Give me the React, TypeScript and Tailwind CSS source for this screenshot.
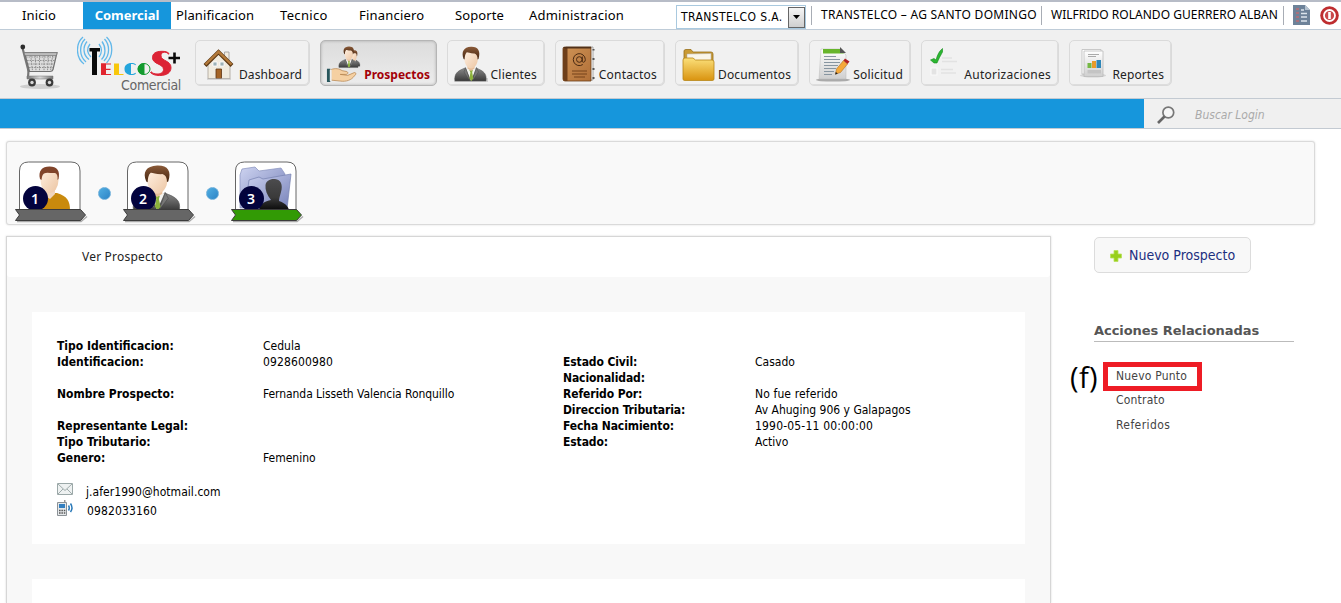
import React from "react";

const CONDENSED = "font-['DejaVu_Sans_Condensed','DejaVu_Sans',sans-serif]";

function Gradients() {
  return (
    <svg className="absolute size-0" aria-hidden="true">
      <defs>
        <linearGradient id="skin" x1="0" y1="0" x2="1" y2="1">
          <stop offset="0" stopColor="#fff0e2" />
          <stop offset="1" stopColor="#ecc5a2" />
        </linearGradient>
        <linearGradient id="suit" x1="0" y1="0" x2="0" y2="1">
          <stop offset="0" stopColor="#8a8a8a" />
          <stop offset="1" stopColor="#3a3a3a" />
        </linearGradient>
        <linearGradient id="hair" x1="0" y1="0" x2="0" y2="1">
          <stop offset="0" stopColor="#8a5a38" />
          <stop offset="1" stopColor="#452510" />
        </linearGradient>
        <linearGradient id="gold" x1="0" y1="0" x2="0" y2="1">
          <stop offset="0" stopColor="#fbe07a" />
          <stop offset="1" stopColor="#d9930f" />
        </linearGradient>
        <linearGradient id="leather" x1="0" y1="0" x2="1" y2="1">
          <stop offset="0" stopColor="#cf9355" />
          <stop offset="1" stopColor="#b06f38" />
        </linearGradient>
        <linearGradient id="paper" x1="0" y1="0" x2="0" y2="1">
          <stop offset="0" stopColor="#ffffff" />
          <stop offset="1" stopColor="#cfcfcf" />
        </linearGradient>
        <linearGradient id="violet" x1="0" y1="0" x2="1" y2="1">
          <stop offset="0" stopColor="#cdd3f0" />
          <stop offset="1" stopColor="#7580b8" />
        </linearGradient>
        <linearGradient id="metal" x1="0" y1="0" x2="1" y2="0">
          <stop offset="0" stopColor="#777" />
          <stop offset=".5" stopColor="#d8d8d8" />
          <stop offset="1" stopColor="#777" />
        </linearGradient>
        <linearGradient id="shadowman" x1="0" y1="0" x2="0" y2="1">
          <stop offset="0" stopColor="#4c4c4e" />
          <stop offset=".6" stopColor="#3a3a3a" />
          <stop offset="1" stopColor="#0a0a0a" />
        </linearGradient>
      </defs>
    </svg>
  );
}

/* Suited man, drawn on a 34x36 grid */
function ManShape() {
  return (
    <g>
      <path d="M1 35 C0 28 3 25 11 22 L17 27 L22 22 C30 25 33 28 32 35 Z" fill="url(#suit)" stroke="#555" strokeWidth=".5" />
      <path d="M12 22 L17 35 L22 22 L17 24 Z" fill="#f4f4f0" />
      <path d="M11.5 21.5 L10 26 L16 35 Z M22.5 21.5 L24.5 26 L18.3 35 Z" fill="#777" stroke="#444" strokeWidth=".4" />
      <path d="M15.4 24 h3.400 l-.6 2.500 1.100 6 -1.900 2.500 -2 -2.500 1 -6 Z" fill="#8cb23c" />
      <path d="M13.500 18 h7 v4.500 l-3.500 2.500 -3.500 -2.500 Z" fill="#e6bd98" />
      <path d="M10.300 12 C10.300 6 13 5 17 5 C21 5 23.900 6 23.900 12 C23.900 18 20.500 22.500 17 22.500 C13.500 22.500 10.300 18 10.300 12 Z" fill="url(#skin)" />
      <path d="M9.6 13 C7 6 9.500 1.200 17 .8 C24 .5 27 5 24.500 13 L23.600 13.500 C23.700 10 22.500 8 20.500 7.400 C16 7.600 13.500 6 12.600 6.400 C11 8 10.700 11 10.600 13.600 Z" fill="url(#hair)" />
    </g>
  );
}

function CartIcon() {
  return (
    <svg className="size-full" viewBox="0 0 42 46">
      <ellipse cx="21" cy="42.5" rx="20" ry="2.5" fill="#cfcfcf" />
      <path d="M3.5 4 L9 25 C10 29 9 31 9 33 H33" fill="none" stroke="#777" strokeWidth="2.2" />
      <circle cx="3.8" cy="3" r="2.4" fill="#2d2d2d" />
      <path d="M5.500 8.500 H38 L34 25.500 Q33.500 27.500 31 27.500 H10.500 Z" fill="#dcdcdc" stroke="#707070" strokeWidth="1.2" />
      <path d="M7 13 H37 M8 16.500 H36 M9 20 H35 M10 23.500 H34 M11.500 9 L13.500 27 M16 9 L17 27 M20.500 9 V27 M25 9 V27 M29.500 9 L28.500 27 M34 9 L31.500 27" stroke="#888" strokeWidth=".9" strokeDasharray="1.6 1" />
      <path d="M5 8.600 H38 L37.500 11.500 H6 Z" fill="#bdbdbd" stroke="#777" strokeWidth=".7" />
      <path d="M8 32 H34 V35 H8 Z" fill="url(#metal)" stroke="#777" strokeWidth=".5" />
      <g fill="#3a3a3a"><circle cx="13" cy="38.500" r="3.900" /><circle cx="30.500" cy="38.500" r="3.900" /></g>
      <g fill="#d8d8d8"><circle cx="13" cy="38.500" r="1.700" /><circle cx="30.500" cy="38.500" r="1.700" /></g>
    </svg>
  );
}

function TelcosLogo() {
  return (
    <svg className="size-full" viewBox="0 0 106 42">
      <g fill="none" stroke="#62b8ea" strokeWidth="1.3">
        <path d="M13 8 C10 12 10 17 14 21" />
        <path d="M10 5.500 C5.500 11 6 19 12 23.500" />
        <path d="M8 3 C2 9 2 20 9 26" />
        <path d="M6 1 C-2 8 -1 22 7 28" />
        <path d="M22 8 C25 12 25 17 22 21" />
        <path d="M25 5.500 C29 11 29 19 24.500 23.500" />
        <path d="M27.500 3 C33 9 33 19 27 25" />
        <path d="M29.500 1 C37 8 36 20 29.500 27" />
      </g>
      <path d="M12.500 12 H23 V15.500 H20 V39 H15 V15.500 H12.500 Z" fill="#0a0a0a" />
      <path d="M24 28 H34 M29 33.300 H33.500 M24 38.500 H34" stroke="#e1252f" strokeWidth="1.200" />
      <path d="M24 27.500 H29 V39 H24 Z" fill="#e1252f" />
      <path d="M37 27.500 H42 V38 H46.500 V39 H37 Z" fill="#f8c70c" />
      <path d="M59 28.600 C57.600 27.400 56.500 27 54.500 27 C50 27 47.500 29.500 47.500 33 C47.500 36.500 50 39 54.500 39 C56.500 39 58 38.500 59 37.500 L58.400 36.800 C57.300 37.700 56.400 38 54 38 V28 C56.400 28 57.500 28.500 58.400 29.300 Z" fill="#24a5dc" />
      <ellipse cx="67" cy="33" rx="6" ry="5.500" fill="#f0f0f0" stroke="#129b2e" strokeWidth="1" />
      <path d="M67.500 27 C58.500 27 58.500 39 67.500 39 Z" fill="#129b2e" />
      <path d="M92 17.500 C90.500 15.800 88 15.300 85 15.300 C78 15.300 75.500 18 75.500 21.700 C75.500 28.500 86.500 27.500 86.500 33.500 C86.500 36.500 83.500 38 80 38 C77.500 38 75.500 37.200 74.200 35.800 L73.500 36.500 C75.500 38.500 78.500 39.500 82.500 39.500 C90 39.500 94 36.500 94 31.500 C94 24.500 84 25 84 19.800 C84 17.500 85 16.200 87.500 16.200 C89.500 16.200 91 17 91.500 18.300 Z" fill="#dc2335" stroke="#dc2335" />
      <path d="M97.500 16.500 v11 M91.500 22 h11.500" stroke="#0a0a0a" strokeWidth="2.600" />
    </svg>
  );
}

function HouseIcon() {
  return (
    <svg className="size-full" viewBox="0 0 36 36">
      <path d="M23.500 6 h4.500 v10 h-4.500 Z" fill="#f2ece0" stroke="#999" strokeWidth=".8" />
      <path d="M7 18 L17 7 L29 18 V32.500 H7 Z" fill="#f1ecdf" stroke="#9e978a" strokeWidth=".7" />
      <path d="M4 19.500 L17.500 6 L31 19.500" fill="none" stroke="#5d3813" strokeWidth="4" />
      <path d="M4.500 18.500 L17.500 5.800 L30.500 18.500" fill="none" stroke="#b2793a" strokeWidth="2.400" />
      <path d="M12 16 h4 v4 h-4 Z M19 16 h4 v4 h-4 Z" fill="#9db2b6" stroke="#fff" strokeWidth=".8" />
      <path d="M15 23 h5.500 v9.500 h-5.500 Z" fill="#a56526" stroke="#5e3511" strokeWidth=".8" />
      <path d="M6 33 h24" stroke="#bbb" />
    </svg>
  );
}

function HandIcon() {
  return (
    <svg className="size-full" viewBox="0 0 36 38">
      <g transform="translate(22 4) scale(.4 .5)"><ManShape /></g>
      <g transform="translate(12 0) scale(.65)"><ManShape /></g>
      <path d="M4 25 C9 23 13 24 16 26 L21 27 C23 28 22 30 20 30 L14 30 L22 31 L29 28 C31 28 31 30 29 31.500 C26 36 20 38 14 37 L4 36 Z" fill="#f5d0a2" stroke="#b8864e" strokeWidth=".8" />
      <path d="M0 24 h3.500 v14 h-3.500 Z" fill="#28565c" />
      <path d="M3 25 h2 v12 h-2 Z" fill="#eee" />
    </svg>
  );
}

function BookIcon() {
  return (
    <svg className="size-full" viewBox="0 0 36 36">
      <path d="M5 1 H32 V34 H5 Z" fill="#fafafa" stroke="#888" strokeWidth=".7" />
      <path d="M32.500 3 v1.500 M32.500 12 v2 M32.500 22 v2 M32.500 31 v2" stroke="#555" strokeWidth="2" />
      <path d="M2 2.500 Q2 1 4 1 H30 V35 H4 Q2 35 2 33 Z" fill="url(#leather)" stroke="#6a3c16" strokeWidth=".8" />
      <path d="M2 3 Q2 1 4 1 H6.500 V35 H4 Q2 35 2 33 Z" fill="#6e3f1a" />
      <path d="M2 1 H30 V2.500 H4 Z" fill="#503019" />
      <path d="M11 25 h15 M11 28 h15 M13 31 h11" stroke="#75421a" />
      <circle cx="18.300" cy="13.500" r="2.800" fill="none" stroke="#4a2a12" strokeWidth="1" />
      <path d="M21.300 10.500 v4.500 c0 2 3 1.800 3-1.500 a6 6 0 1 0-2.500 5" fill="none" stroke="#4a2a12" strokeWidth="1" />
    </svg>
  );
}

function FolderIcon() {
  return (
    <svg className="size-full" viewBox="0 0 36 36">
      <path d="M3 31 V5 Q3 3.500 5 3.500 H10 L12 6 H30 Q32 6 32 8 V31 Z" fill="#c99a35" stroke="#98701a" strokeWidth=".8" />
      <path d="M6 8 L30 7.500 V17 H6 Z" fill="#faf6ea" stroke="#aaa" strokeWidth=".5" />
      <path d="M2 14 Q2 12 4 12 H12 L14.500 14 H31 Q33 14 33 16 V33 Q33 34.500 31 34.500 H4 Q2 34.500 2 33 Z" fill="url(#gold)" stroke="#b88618" strokeWidth=".8" />
    </svg>
  );
}

function RequestIcon() {
  return (
    <svg className="size-full" viewBox="0 0 36 36">
      <ellipse cx="17" cy="34" rx="17" ry="1.600" fill="#aaa" />
      <path d="M5 3 H24 L30 9 V33 H3 Z" fill="url(#paper)" stroke="#bbb" strokeWidth=".5" />
      <path d="M7 3 H25 L28 7.500 H7 Z" fill="#67b52c" />
      <path d="M24 1 L30 7 H24 Z" fill="#555" />
      <path d="M8 10.500 h12 M8 13.500 h16 M8 16.500 h16 M8 19.500 h14 M8 22.500 h12 M8 25.500 h10 M8 28.500 h8" stroke="#8795a0" strokeWidth="1.100" />
      <path d="M19.500 28 L20.500 23 L27.500 14.500 L31.500 18 L24.500 26.500 Z" fill="#f5a93a" stroke="#b26e20" strokeWidth=".6" />
      <path d="M27.500 14.500 L29 12.500 L33.500 15.500 L31.500 18 Z" fill="#b22224" />
      <path d="M19.200 28.800 L19.800 26 L21.800 27.500 Z" fill="#222" />
    </svg>
  );
}

function CheckIcon() {
  return (
    <svg className="size-full" viewBox="0 0 36 36">
      <path d="M3.500 14 L7 12.500 L9 14 Q11 6 15.500 2.500 L15.500 6 Q12 12 10 17 L7 17 Z" fill="#2cb631" stroke="#138a1a" strokeWidth=".6" />
      <path d="M15 12 h10 M15 15.500 h15 M14 23.500 h12 M14 27 h15" stroke="#e2e2e2" strokeWidth="1.300" />
      <path d="M4 22 h6 v7 h-6 Z" fill="#e3e3e3" stroke="#f9f9f9" strokeWidth="1.200" />
    </svg>
  );
}

function ReportIcon() {
  return (
    <svg className="size-full" viewBox="0 0 36 36">
      <ellipse cx="18" cy="29.500" rx="13" ry="2" fill="#d4d4d4" />
      <path d="M7 3.500 H26 V28 H7 Z" fill="#fff" stroke="#bbb" strokeWidth=".8" />
      <path d="M9 5 H28 V30.500 H9 Z" fill="url(#paper)" stroke="#bbb" strokeWidth=".8" />
      <path d="M13 8.500 h11 M13 10.500 h8" stroke="#aaa" />
      <path d="M12.500 17 h4 v5 h-4 Z" fill="#75b844" />
      <path d="M17 15 h4 v7 h-4 Z" fill="#e89a2a" />
      <path d="M21.500 14 h4.500 v8 h-4.500 Z" fill="#2e86b8" />
      <path d="M12.500 24 h13.500 v3.500 h-13.500 Z" fill="#c4c4c4" />
    </svg>
  );
}

function ManIcon() {
  return (
    <svg className="size-full" viewBox="0 0 34 36">
      <path d="M0 32 h34 v4 h-34 Z" fill="#cfcfcf" />
      <ManShape />
    </svg>
  );
}

type MenuItem = { label: string; cell: string };

const menu: MenuItem[] = [
  { label: "Inicio", cell: "w-[83px] justify-center pr-[5px] tracking-[0.15px]" },
  { label: "Comercial", cell: "w-[88px] justify-center bg-[#1696dc] font-bold text-white" },
  { label: "Planificacion", cell: "w-[109px] pl-[5px] tracking-[0.1px]" },
  { label: "Tecnico", cell: "w-[79px] tracking-[0.35px]" },
  { label: "Financiero", cell: "w-[96px] tracking-[0.2px]" },
  { label: "Soporte", cell: "w-[74px] tracking-[0.1px]" },
  { label: "Administracion", cell: "w-[147px] tracking-[0.22px]" },
];

function TopMenu() {
  return (
    <nav className="flex h-[30px] items-stretch border-t-2 border-b border-t-[#b7bcc7] border-b-[#bfccd8] bg-white text-[13px]">
      {menu.map((m) => (
        <a key={m.label} className={`flex shrink-0 items-center pt-px ${m.cell}`}>
          {m.label}
        </a>
      ))}
      <div className="mt-[3px] flex h-6 w-[130px] shrink-0 items-center border border-[#a9c9df] bg-white pl-1">
        <span className={`w-[107px] shrink-0 text-[12px] tracking-[0.4px] whitespace-nowrap ${CONDENSED}`}>TRANSTELCO S.A.</span>
        <span className="flex h-[21px] w-[17px] shrink-0 items-center justify-center border border-[#666] bg-linear-to-b from-[#f5f5f5] to-[#cfcfcf]">
          <svg className="h-1 w-[7px]" viewBox="0 0 7 4"><path d="M0 0 H7 L3.500 4 Z" fill="#000" /></svg>
        </span>
      </div>
      <div className="mt-[3px] ml-[5px] flex h-5 shrink-0 items-center text-[12px] whitespace-nowrap">
        <span className="w-[230px] border-l border-[#a8adb5] pb-px pl-[9px] tracking-[0.28px]">TRANSTELCO – AG SANTO DOMINGO</span>
        <span className="w-[243px] border-x border-[#a8adb5] pb-px pl-[9px] tracking-[0.03px]">WILFRIDO ROLANDO GUERRERO ALBAN</span>
      </div>
      <svg className="mt-[3px] ml-[9px] h-[20px] w-[17px] shrink-0" viewBox="0 0 17 20">
        <path d="M0 0 H12 L17 5 V20 H0 Z" fill="#6d8299" />
        <path d="M12 0 V5 H17 Z" fill="#b5c2d0" />
        <path d="M3 4 h3 M3 8 h3 M3 12 h3 M3 16 h3" stroke="#a8707c" strokeWidth="2" />
        <path d="M8 5 h3 M8 8.500 h6 M8 12 h6 M8 16 h6" stroke="#dbe4ec" strokeWidth="1.500" />
      </svg>
      <svg className="mt-1 ml-[10px] size-[19px] shrink-0" viewBox="0 0 19 19">
        <circle cx="9.500" cy="9.500" r="9.300" fill="#be2d2f" />
        <circle cx="9.500" cy="9.500" r="5.500" fill="#c9484a" stroke="#fff" strokeWidth="1.800" />
        <path d="M9.500 6 v7" stroke="#fff" strokeWidth="2.600" />
      </svg>
    </nav>
  );
}

type Tool = { label: string; box: string; icon: React.ReactNode; iconBox: string; active?: boolean };

const tools: Tool[] = [
  { label: "Dashboard", box: "w-[115px] mr-[10px] pr-[7px] tracking-[0.1px]", iconBox: "left-[5px]", icon: <HouseIcon /> },
  { label: "Prospectos", box: "w-[117px] mr-[10px] pr-[6px]", iconBox: "left-[5px]", icon: <HandIcon />, active: true },
  { label: "Clientes", box: "w-[98px] mr-[10px] pr-[7px] tracking-[0.2px]", iconBox: "left-[5px]", icon: <ManIcon /> },
  { label: "Contactos", box: "w-[110px] mr-[10px] pr-[7px] tracking-[0.2px]", iconBox: "left-[5px]", icon: <BookIcon /> },
  { label: "Documentos", box: "w-[124px] mr-[10px] pr-[7px] tracking-[0.1px]", iconBox: "left-[5px]", icon: <FolderIcon /> },
  { label: "Solicitud", box: "w-[102px] mr-[10px] pr-[7px] tracking-[0.2px]", iconBox: "left-[6px]", icon: <RequestIcon /> },
  { label: "Autorizaciones", box: "w-[138px] mr-[10px] pr-[7px] tracking-[0.25px]", iconBox: "left-[5px]", icon: <CheckIcon /> },
  { label: "Reportes", box: "w-[103px] pr-[7px] tracking-[0.1px]", iconBox: "left-[5px]", icon: <ReportIcon /> },
];

function Toolbar() {
  return (
    <div className="flex h-[68px] items-start bg-[#f0f0f0]">
      <div className="mt-[14px] ml-[19px] h-[46px] w-[42px] shrink-0"><CartIcon /></div>
      <div className="mt-[6px] ml-4 flex h-[60px] w-[106px] shrink-0 flex-col">
        <div className="h-[42px] shrink-0"><TelcosLogo /></div>
        <span className={`-mt-[2px] self-end pr-[2px] text-[14px] leading-[18px] tracking-[-0.35px] text-[#666] ${CONDENSED}`}>Comercial</span>
      </div>
      <div className="mt-[10px] ml-[12px] flex text-[12px] text-[#222]">
        {tools.map((t) => (
          <a
            key={t.label}
            className={`relative flex h-[46px] shrink-0 items-end justify-end rounded-[5px] border pb-px ${t.box} ${
              t.active
                ? "border-[#b5b5b5] bg-linear-to-b from-[#dcdcdc] to-[#ececec] font-bold text-[#a30008] shadow-[inset_0_0_3px_#aaa]"
                : "border-[#dadada] bg-[#f1f1f1] shadow-[inset_-1px_-1px_0_#dddddd]"
            }`}
          >
            <span className={`absolute top-[5px] size-9 ${t.iconBox}`}>{t.icon}</span>
            {t.label}
          </a>
        ))}
      </div>
    </div>
  );
}

function SearchBar() {
  return (
    <div className="flex h-[31px] border-y border-[#c3cad2] bg-[#f0f0f0]">
      <div className="w-[1144px] bg-[#1696dc]" />
      <div className="flex items-center pl-[13px]">
        <svg className="mt-[3px] size-[18px]" viewBox="0 0 18 18">
          <circle cx="11.300" cy="6.500" r="5.400" fill="#f6f6f6" stroke="#777" strokeWidth="1.700" />
          <path d="M7.500 10.500 L1 17" stroke="#666" strokeWidth="2.600" />
        </svg>
        <span className={`mt-[3px] ml-5 text-[12px] text-[#aaa] italic ${CONDENSED}`}>Buscar Login</span>
      </div>
    </div>
  );
}

function CasualMan() {
  return (
    <g>
      <path d="M10 49 C10 37 15 34 25 32 H38 C48 35 51 40 51 49 Z" fill="#c98a0d" />
      <path d="M25 24 h11 v9 l-5 5 -6 -4 Z" fill="#f0d5bd" />
      <ellipse cx="30.500" cy="19" rx="9" ry="13" fill="url(#skin)" />
      <path d="M21 18 C19 10 23 5.500 30.500 5.500 C38 5.500 41.500 10 39.500 18 L38.500 19 C39 15 38 12.500 36 12 C32 12.500 28 11 25 12.500 C23 14 23 16 22.500 19 Z" fill="#80442a" />
    </g>
  );
}

function FolderMan() {
  return (
    <g>
      <path d="M5 47 V14 L7 8 L20 6 L24 10 L46 7 L50 13 V47 Z" fill="url(#violet)" stroke="#8690bd" strokeWidth=".7" />
      <path d="M10 48 L14 19 L24 16 L28 18 L56 13 L52 48 Z" fill="url(#violet)" stroke="#7681b0" strokeWidth=".7" />
      <path d="M24 49 C25 43 30 40 36 39 C32 34 30 29 30.500 24 C31 20 35 17.500 40 18 C46 18.500 48 24 46 31 C45 35 44 37 44 40 C50 42 53 45 54 49 Z" fill="url(#shadowman)" />
    </g>
  );
}

const steps = [
  { n: 1, ribbon: "#666666", figure: <CasualMan /> },
  { n: 2, ribbon: "#666666", figure: <g transform="translate(5 3.500) scale(1.480 1.300)"><ManShape /></g> },
  { n: 3, ribbon: "#329a05", figure: <FolderMan /> },
];

function Steps() {
  return (
    <section className="mt-3 ml-[6px] flex h-[84px] w-[1309px] items-start rounded-[3px] border border-[#dadada] bg-[#f9f9f9] pl-2 shadow-[0_0_2px_#d8d8d8]">
      {steps.map((s) => (
        <React.Fragment key={s.n}>
          {s.n > 1 && (
            <span className="mt-[45px] mr-3 ml-[10px] size-[13px] shrink-0 rounded-full border border-[#70b0db] bg-linear-to-br from-[#50aee2] to-[#2d84c6]" />
          )}
          <div className="relative mt-[19px] h-[62px] w-[73px] shrink-0">
            <svg className="size-full" viewBox="0 0 73 62">
              <path d="M4.500 49 V10 Q4.500 1 13.500 1 H56 Q65 1 65 10 V49 Z" fill="#fff" stroke="#666" strokeWidth="1" />
              <g transform="translate(4 0)">{s.figure}</g>
              <circle cx="20.500" cy="37.500" r="12.500" fill="#03033d" />
              <path d="M2 60.500 H66 L72 55.500" fill="none" stroke="#aaa" strokeWidth="1.500" />
              <path d="M.5 48.500 H65.500 L70.500 54 L65.500 59.500 H.5 L4.500 54 Z" fill={s.ribbon} stroke="#3c3c3c" strokeWidth="1" />
            </svg>
            <span className="absolute top-[28px] left-[10px] w-5 text-center text-[14px] leading-5 font-semibold text-white">{s.n}</span>
          </div>
        </React.Fragment>
      ))}
    </section>
  );
}

const left: [string, string][] = [
  ["Tipo Identificacion:", "Cedula"],
  ["Identificacion:", "0928600980"],
  ["", ""],
  ["Nombre Prospecto:", "Fernanda Lisseth Valencia Ronquillo"],
  ["", ""],
  ["Representante Legal:", ""],
  ["Tipo Tributario:", ""],
  ["Genero:", "Femenino"],
];

const right: [string, string][] = [
  ["", ""],
  ["Estado Civil:", "Casado"],
  ["Nacionalidad:", ""],
  ["Referido Por:", "No fue referido"],
  ["Direccion Tributaria:", "Av Ahuging 906 y Galapagos"],
  ["Fecha Nacimiento:", "1990-05-11 00:00:00"],
  ["Estado:", "Activo"],
];

function valueTracking(v: string) {
  if (/^\d+$/.test(v)) return "tracking-[0.12px]";
  if (/^\d/.test(v)) return "tracking-[0.18px]";
  if (v.length > 30) return "tracking-[-0.06px]";
  return v.startsWith("No ") ? "tracking-[0.12px]" : "";
}

function Fields({ rows, label, className }: { rows: [string, string][]; label: string; className: string }) {
  return (
    <dl className={className}>
      {rows.map(([k, v], i) => (
        <div key={i} className="flex h-4">
          <dt className={`shrink-0 font-bold ${label}`}>{k}</dt>
          <dd className={valueTracking(v)}>{v}</dd>
        </div>
      ))}
    </dl>
  );
}

function Detail() {
  return (
    <main className="h-[367px] w-[1045px] shrink-0 border border-b-0 border-[#d6d6d6] bg-[#f8f8f8] shadow-[0_0_2px_#d8d8d8]">
      <h2 className="h-10 rounded-b-[3px] bg-white pt-[11px] pl-[75px] text-[12px] leading-[18px] tracking-[0.2px] text-[#222]">Ver Prospecto</h2>
      <div className={`mt-[35px] ml-[25px] h-[232px] w-[993px] bg-white pt-[26px] pl-[25px] text-[12px] leading-4 text-black ${CONDENSED}`}>
        <div className="flex">
          <Fields rows={left} label="w-[206px]" className="w-[506px]" />
          <Fields rows={right} label="w-[192px] tracking-[-0.1px]" className="" />
        </div>
        <div className="mt-[15px] flex h-[19px]">
          <svg className="mt-[2px] h-3 w-4" viewBox="0 0 16 12">
            <path d="M.5 .5 H15.500 V11.500 H.5 Z" fill="#eef1f1" stroke="#9ba8a8" />
            <path d="M1 1 L8 7.500 L15 1 M1 11 L6 6 M15 11 L10 6" fill="none" stroke="#9fabab" />
          </svg>
          <span className="mt-[3px] ml-[13px] tracking-[0.05px]">j.afer1990@hotmail.com</span>
        </div>
        <div className="flex h-[19px]">
          <svg className="h-[17px] w-4" viewBox="0 0 16 17">
            <path d="M7 0 h1.500 v4 h-1.500 Z" fill="#999" />
            <path d="M.5 2.500 H9.500 V15.500 H.5 Z" fill="#e5e8ea" stroke="#8b9196" />
            <path d="M2 4 H8 V8 H2 Z" fill="#337fc0" />
            <path d="M2 10.500 h1.600 M4.400 10.500 h1.500 M6.800 10.500 h1.500 M2 13 h1.600 M4.400 13 h1.500 M6.800 13 h1.500" stroke="#555" strokeWidth="1.300" />
            <path d="M11.500 5.500 Q13 8 11.500 10.500 M13.500 3.500 Q16.500 8 13.500 12" fill="none" stroke="#2878b8" strokeWidth="1.500" />
          </svg>
          <span className="mt-[3px] ml-[14px] tracking-[0.12px]">0982033160</span>
        </div>
      </div>
      <div className="mt-[35px] ml-[25px] h-6 w-[993px] bg-white" />
    </main>
  );
}

function Sidebar() {
  return (
    <aside className={`ml-[43px] w-[200px] text-[12px] text-[#444] ${CONDENSED}`}>
      <a className="mt-px flex h-9 w-[157px] items-center rounded-[5px] border border-[#dcdcdc] bg-[#f8f8f8] pt-px pl-[15px] text-[14px] whitespace-nowrap text-[#1c2f80]">
        <svg className="mr-[7px] size-3 shrink-0" viewBox="0 0 12 12">
          <path d="M4 .5 h4 v3.500 h3.500 v4 H8 v3.500 H4 V8 H.5 V4 H4 Z" fill="#98cf1c" stroke="#b9e05c" strokeWidth=".8" />
        </svg>
        Nuevo Prospecto
      </a>
      <h3 className="mt-12 h-[21px] border-b border-[#bbb] font-['DejaVu_Sans',sans-serif] text-[13px] leading-[19px] font-bold tracking-[-0.05px] whitespace-nowrap text-[#555]">
        Acciones Relacionadas
      </h3>
      <div className="mt-5 -ml-[24px] flex h-[29px] items-center">
        <span className="w-[33px] shrink-0 font-['Open_Sans',sans-serif] text-[29px] leading-[29px] tracking-[0.4px] text-black">(f)</span>
        <span className="flex h-[29px] w-[99px] shrink-0 items-center border-[5px] border-[#ee1c25] bg-white pb-px pl-2 tracking-[0.2px]">Nuevo Punto</span>
      </div>
      <div className="pl-[22px] tracking-[0.2px]">
        <p className="h-[25px] leading-[18px]">Contrato</p>
        <p className="leading-[18px] tracking-[0.4px]">Referidos</p>
      </div>
    </aside>
  );
}

export default function App() {
  return (
    <div className="h-[603px] w-[1341px] overflow-hidden bg-white font-['Noto_Sans','Open_Sans',sans-serif] text-black">
      <Gradients />
      <TopMenu />
      <Toolbar />
      <SearchBar />
      <Steps />
      <div className="mt-[11px] ml-[6px] flex">
        <Detail />
        <Sidebar />
      </div>
    </div>
  );
}
